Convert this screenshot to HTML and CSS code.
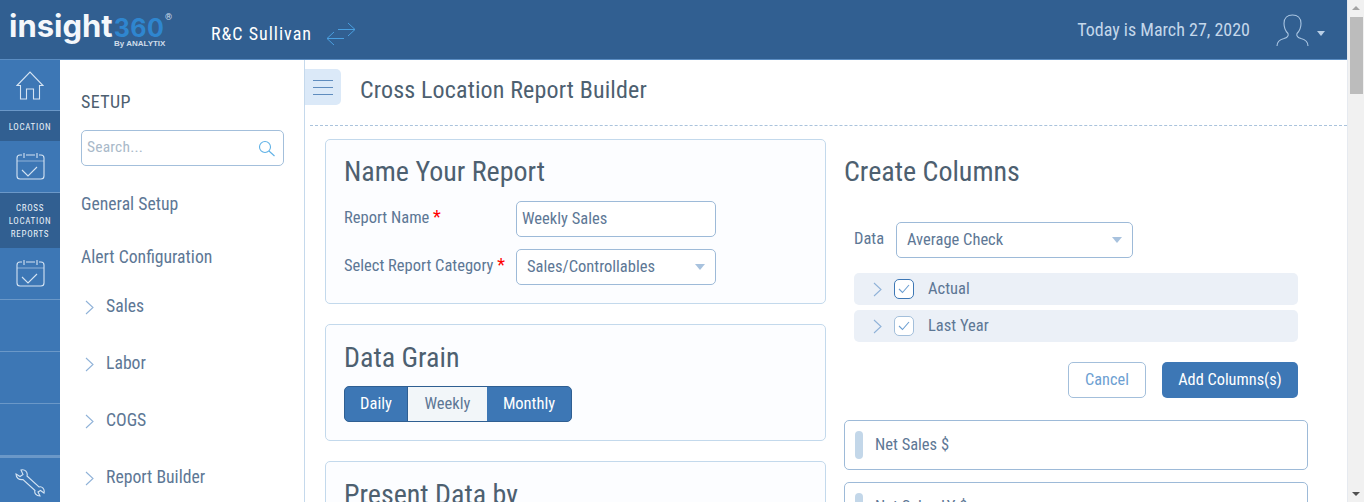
FILE: index.html
```html
<!DOCTYPE html>
<html lang="en">
<head>
<meta charset="utf-8">
<title>Cross Location Report Builder</title>
<link rel="stylesheet" href="styles.css">
</head>
<body>
<div class="window">
  <div class="page">
    <header class="topbar">
      <div class="logo">
        <span class="logo-word">insight<span class="logo-num">360</span></span><span class="logo-reg">®</span>
        <span class="logo-by">By ANALYTIX</span>
      </div>
      <span class="org">R&amp;C Sullivan</span>
      <svg class="swap" width="30" height="24" viewBox="0 0 30 24" fill="none" stroke="#4a9fe0" stroke-width="1"><path d="M12 7.500H29M22 1l7 6.500-7 6.500"/><path d="M1 16.500H18M8 10l-7 6.500 7 6.500"/></svg>
      <span class="today">Today is March 27, 2020</span>
      <svg class="user" width="34" height="34" viewBox="0 0 34 34" fill="none" stroke="#a9c5e2" stroke-width="1.100"><path d="M1 32c0-5 3-6.500 7-7.500 3-1 5-2.500 4-5-3-3-4-6.500-4-10C8 4 11.500 1 16.500 1S25 4 25 9.500c0 3.500-1 7-4 10-1 2.500 1 4 4 5 4 1 7 2.500 7 7.500"/></svg>
      <span class="caret caret-light"></span>
    </header>
    <div class="body-row">
      <nav class="rail">
        <a class="rail-item rail-home">
          <svg width="28" height="29" viewBox="0 0 28 29" fill="none" stroke="#d5e4f3" stroke-width="1.100"><path d="M1 14.500L14 1l13 13.500h-3.500V28h-6V18h-7v10h-6V14.500z"/></svg>
        </a>
        <a class="rail-label rail-label-one">LOCATION</a>
        <a class="rail-item rail-cal">
          <svg width="29" height="28" viewBox="0 0 29 28" fill="none" stroke="#d5e4f3" stroke-width="1.100"><path d="M6 3H4a3 3 0 0 0-3 3v18a3 3 0 0 0 3 3h21a3 3 0 0 0 3-3V6a3 3 0 0 0-3-3h-2M10 3h9M8 1v5M21 1v5M6 18l6 6 9-9"/><path d="M1 9h27" stroke-opacity=".5"/></svg>
        </a>
        <a class="rail-label rail-label-three">CROSS<br>LOCATION<br>REPORTS</a>
        <a class="rail-item rail-cal">
          <svg width="29" height="28" viewBox="0 0 29 28" fill="none" stroke="#d5e4f3" stroke-width="1.100"><path d="M6 3H4a3 3 0 0 0-3 3v18a3 3 0 0 0 3 3h21a3 3 0 0 0 3-3V6a3 3 0 0 0-3-3h-2M10 3h9M8 1v5M21 1v5M6 18l6 6 9-9"/><path d="M1 9h27" stroke-opacity=".5"/></svg>
        </a>
        <a class="rail-item rail-empty"></a>
        <a class="rail-item rail-empty"></a>
        <a class="rail-item rail-empty rail-last"></a>
        <a class="rail-item rail-tool">
          <svg width="30" height="29" viewBox="0 0 30 29" fill="none" stroke="#d5e4f3" stroke-width="1.100"><path d="M12 8L24 19C27 18 30 21 29 25L25.500 22.500 23 24 25 28C21 28 19 25 20 22.500L8 11.500C4 12 1 10 1 6L5 8.500 8 6.500 6 2C10 1 13 4 12 8Z"/></svg>
        </a>
      </nav>
      <aside class="setup">
        <h2 class="setup-title">SETUP</h2>
        <div class="search">
          <span class="search-text">Search...</span>
          <svg width="17" height="17" viewBox="0 0 17 17" fill="none" stroke="#5fb1e6" stroke-width="1.100"><circle cx="7" cy="7" r="5.500"/><path d="M11 11l5.500 5"/></svg>
        </div>
        <ul class="setup-list">
          <li class="setup-link">General Setup</li>
          <li class="setup-link">Alert Configuration</li>
          <li class="setup-row"><svg class="chev" width="9" height="15" viewBox="0 0 9 15" fill="none" stroke="#8fb2d8" stroke-width="1.100"><path d="M1 1l7 6.500L1 14"/></svg>Sales</li>
          <li class="setup-row"><svg class="chev" width="9" height="15" viewBox="0 0 9 15" fill="none" stroke="#8fb2d8" stroke-width="1.100"><path d="M1 1l7 6.500L1 14"/></svg>Labor</li>
          <li class="setup-row"><svg class="chev" width="9" height="15" viewBox="0 0 9 15" fill="none" stroke="#8fb2d8" stroke-width="1.100"><path d="M1 1l7 6.500L1 14"/></svg>COGS</li>
          <li class="setup-row"><svg class="chev" width="9" height="15" viewBox="0 0 9 15" fill="none" stroke="#8fb2d8" stroke-width="1.100"><path d="M1 1l7 6.500L1 14"/></svg>Report Builder</li>
        </ul>
      </aside>
      <main class="main">
        <div class="titlebar">
          <button class="burger"><span></span><span></span><span></span></button>
          <h1 class="page-title">Cross Location Report Builder</h1>
        </div>
        <div class="columns">
          <section class="left-col">
            <div class="card card-name">
              <h3 class="card-title">Name Your Report</h3>
              <div class="form-row">
                <label class="form-label">Report Name <em>*</em></label>
                <div class="field field-input">Weekly Sales</div>
              </div>
              <div class="form-row">
                <label class="form-label">Select Report Category <em>*</em></label>
                <div class="field field-select">Sales/Controllables<span class="caret"></span></div>
              </div>
            </div>
            <div class="card card-grain">
              <h3 class="card-title">Data Grain</h3>
              <div class="segmented">
                <span class="seg seg-daily">Daily</span>
                <span class="seg seg-weekly">Weekly</span>
                <span class="seg seg-monthly">Monthly</span>
              </div>
            </div>
            <div class="card card-present">
              <h3 class="card-title">Present Data by</h3>
            </div>
          </section>
          <section class="right-col">
            <h3 class="right-title">Create Columns</h3>
            <div class="data-row">
              <label class="data-label">Data</label>
              <div class="field field-data">Average Check<span class="caret"></span></div>
            </div>
            <div class="check-row">
              <svg class="chev" width="9" height="15" viewBox="0 0 9 15" fill="none" stroke="#8fb2d8" stroke-width="1.100"><path d="M1 1l7 6.500L1 14"/></svg>
              <span class="checkbox checkbox-focus"><svg width="12" height="10" viewBox="0 0 12 10" fill="none" stroke="#6d9fd2" stroke-width="1.100"><path d="M1 5l3.500 3.500L11 1"/></svg></span>
              <span class="check-label">Actual</span>
            </div>
            <div class="check-row">
              <svg class="chev" width="9" height="15" viewBox="0 0 9 15" fill="none" stroke="#8fb2d8" stroke-width="1.100"><path d="M1 1l7 6.500L1 14"/></svg>
              <span class="checkbox"><svg width="12" height="10" viewBox="0 0 12 10" fill="none" stroke="#6d9fd2" stroke-width="1.100"><path d="M1 5l3.500 3.500L11 1"/></svg></span>
              <span class="check-label">Last Year</span>
            </div>
            <div class="actions">
              <button class="btn btn-cancel">Cancel</button>
              <button class="btn btn-add">Add Columns(s)</button>
            </div>
            <div class="col-card"><span class="grip"></span><span class="col-name">Net Sales $</span></div>
            <div class="col-card"><span class="grip"></span><span class="col-name">Net Sales LY $</span></div>
          </section>
        </div>
      </main>
    </div>
  </div>
  <div class="scrollbar">
    <span class="sb-up"></span>
    <span class="sb-thumb"></span>
    <span class="sb-down"></span>
  </div>
</div>
</body>
</html>
```
FILE: styles.css
```css
* { box-sizing: border-box; }
html, body { margin: 0; height: 100%; overflow: hidden; }
body { font-family: "Roboto Condensed", "Liberation Sans Narrow", Roboto, sans-serif; font-stretch: 85%; color: #5d7795; background: #fff; }
h1, h2, h3, ul { margin: 0; padding: 0; font-weight: 400; }
ul { list-style: none; }

.window { display: flex; height: 502px; width: 1364px; overflow: hidden; }
.page { width: 1347px; display: flex; flex-direction: column; }

.topbar { height: 60px; flex: none; background: #315f91; border-bottom: 1px solid #5b8dc2; display: flex; align-items: center; position: relative; }
.logo { width: 211px; height: 60px; flex: none; padding: 12px 0 0 9px; position: relative; }
.logo-word { font-family: Inter, sans-serif; font-stretch: 100%; font-weight: 700; font-size: 31px; line-height: 28px; letter-spacing: 0; color: #f4f7fb; display: block; white-space: nowrap; }
.logo-num { color: #2f86cf; font-size: 25px; font-weight: 700; letter-spacing: .5px; margin-left: 1px; }
.logo-reg { position: absolute; left: 165px; top: 12px; font-size: 9px; line-height: 10px; color: #cfdcea; }
.logo-by { position: absolute; left: 114px; top: 40px; font-family: "Liberation Sans", sans-serif; font-stretch: 100%; font-weight: 700; font-size: 8px; line-height: 7px; color: #cfdcea; white-space: nowrap; }
.org { color: #fff; font-size: 18px; letter-spacing: 1px; margin-top: 7px; width: 115px; flex: none; white-space: nowrap; }
.swap { flex: none; margin-top: 9px; }
.today { margin-left: auto; color: #c4d7ea; font-size: 18px; letter-spacing: 0; }
.user { margin-left: 26px; margin-top: 2px; flex: none; }
.caret { display: block; width: 0; height: 0; border: 5px solid transparent; border-top: 6px solid #a8c2de; border-bottom: 0; }
.caret-light { border-width: 5px 4px 0; border-top-color: #b9cfe6; margin: 7px 22px 0 7px; flex: none; }

.body-row { flex: 1; display: flex; min-height: 0; }

.rail { width: 60px; flex: none; background: #3d77b5; display: flex; flex-direction: column; }
.rail-item { display: flex; align-items: center; justify-content: center; flex: none; border-bottom: 1px solid #6b98c8; }
.rail-home { height: 51px; }
.rail-cal { height: 52px; padding-bottom: 2px; }
.rail-empty { height: 52px; }
.rail-last { border-bottom: 3px solid #6b98c8; height: 54px; }
.rail-tool { height: 44px; border-bottom: 0; padding-top: 4px; }
.rail-label { display: block; flex: none; background: #315f91; color: #e8f0f8; font-size: 9px; letter-spacing: .7px; line-height: 13px; text-align: center; }
.rail-label-one { height: 30px; padding-top: 10px; }
.rail-label-three { height: 55px; padding-top: 9px; }

.setup { width: 245px; flex: none; border-right: 1px solid #c5d9ec; padding: 31px 20px 0 21px; }
.setup-title { color: #4d6070; font-size: 18px; line-height: 22px; letter-spacing: .4px; }
.search { margin-top: 17px; height: 36px; width: 203px; border: 1px solid #a3bfdb; border-radius: 5px; padding: 0 8px 0 5px; display: flex; align-items: center; justify-content: space-between; }
.search-text { color: #a9b9c9; font-size: 15.500px; letter-spacing: .2px; padding-bottom: 2px; }
.setup-list { margin-top: 27px; }
.setup-link { font-size: 17.700px; line-height: 22px; height: 53px; }
.setup-row { font-size: 17.700px; line-height: 22px; height: 57px; padding-left: 4px; display: flex; align-items: flex-start; gap: 12px; }
.setup-row .chev { margin-top: 5px; flex: none; }
.setup-link + .setup-row { margin-top: -4px; }

.main { flex: 1; min-width: 0; display: flex; flex-direction: column; }
.titlebar { height: 66px; flex: none; margin-left: 5px; border-bottom: 1px dashed #aac3dc; display: flex; align-items: center; position: relative; padding-bottom: 6px; }
.burger { position: absolute; left: -5px; top: 9px; width: 36px; height: 36px; padding: 0; border: 0; background: #dbe9f8; border-radius: 0 5px 5px 0; display: flex; flex-direction: column; gap: 6px; align-items: center; justify-content: center; }
.burger span { display: block; width: 20px; height: 1px; background: #5f8cbe; }
.page-title { margin-left: 50px; color: #4d6070; font-size: 24px; letter-spacing: .15px; }

.columns { flex: 1; min-height: 0; display: flex; padding: 13px 0 0 20px; gap: 19px; overflow: hidden; }
.left-col { width: 501px; flex: none; display: flex; flex-direction: column; gap: 20px; }
.card { background: #fcfdff; border: 1px solid #c3d9ec; border-radius: 5px; padding: 14px 18px 0; flex: none; width: 501px; }
.card-name { height: 165px; }
.card-grain { height: 117px; padding-top: 15px; }
.card-present { height: 120px; padding-top: 15px; }
.card-title { color: #4d6070; font-size: 28px; line-height: 36px; }
.form-row { display: flex; align-items: center; margin-top: 12px; }
.card-title + .form-row { margin-top: 11px; }
.form-label { width: 172px; flex: none; font-size: 16.500px; white-space: nowrap; padding-bottom: 6px; }
.form-label em { color: #f00; font-style: normal; font-size: 18px; }
.field { border: 1px solid #9dbad8; border-radius: 5px; background: #fff; height: 36px; display: flex; align-items: center; font-size: 16.500px; padding-bottom: 2px; }
.field .caret { margin-left: auto; margin-top: 2px; }
.field-input { width: 200px; padding-left: 5px; }
.field-select { width: 200px; padding-left: 10px; padding-right: 10px; }
.segmented { margin-top: 10px; width: 228px; height: 36px; display: flex; border: 1px solid #2f5f92; border-radius: 5px; overflow: hidden; background: #3d77b5; font-size: 16.500px; }
.seg { display: flex; align-items: center; justify-content: center; color: #fff; padding-bottom: 2px; }
.seg-daily { width: 63px; border-right: 1px solid #2f5f92; }
.seg-weekly { width: 79px; background: #f2f6f9; color: #5d7795; }
.seg-monthly { flex: 1; }

.right-col { width: 464px; flex: none; margin-left: -1px; }
.right-title { color: #4d6070; font-size: 28px; line-height: 36px; margin-top: 15px; }
.data-row { display: flex; align-items: center; margin: 32px 0 15px 10px; }
.data-label { width: 42px; flex: none; font-size: 16.500px; padding-bottom: 4px; }
.field-data { width: 237px; padding-left: 10px; padding-right: 10px; }
.check-row { width: 444px; height: 32px; margin: 0 0 5px 10px; padding-left: 19px; background: #ebf0f7; border-radius: 5px; display: flex; align-items: center; }
.check-row .chev { flex: none; }
.checkbox { width: 20px; height: 20px; margin-left: 12px; flex: none; border: 1px solid #a3bfdb; border-radius: 5px; background: #fff; display: flex; align-items: center; justify-content: center; }
.checkbox-focus { border-color: #3d77b5; }
.check-label { margin-left: 14px; font-size: 16.500px; padding-bottom: 2px; }
.actions { display: flex; justify-content: flex-end; gap: 16px; width: 454px; margin-top: 20px; }
.btn { height: 36px; border-radius: 5px; font-family: inherit; font-stretch: inherit; font-size: 16.300px; padding: 0 0 2px; }
.btn-cancel { width: 78px; background: #fff; border: 1px solid #a3bfdb; color: #6d9fd2; }
.btn-add { width: 136px; background: #3d77b5; border: 0; color: #fff; }
.col-card { margin-top: 22px; width: 464px; height: 50px; border: 1px solid #9dbad8; border-radius: 5px; background: #fff; display: flex; align-items: center; padding-left: 10px; }
.col-card + .col-card { margin-top: 12px; }
.grip { width: 8px; height: 28px; border-radius: 4px; background: #c3d7e9; flex: none; }
.col-name { margin-left: 12px; font-size: 16.500px; padding-bottom: 2px; }

.scrollbar { width: 17px; flex: none; background: #f1f1f1; display: flex; flex-direction: column; align-items: center; padding-top: 6px; border-left: 1px solid #e6eaf0; }
.sb-up { width: 0; height: 0; border: 4px solid transparent; border-top: 0; border-bottom: 4px solid #a3a3a3; }
.sb-thumb { width: 13px; height: 77px; margin-top: 7px; background: #bcbcbc; }
.sb-down { width: 0; height: 0; margin-top: auto; margin-bottom: 6px; border: 4px solid transparent; border-bottom: 0; border-top: 4px solid #505050; }
```
